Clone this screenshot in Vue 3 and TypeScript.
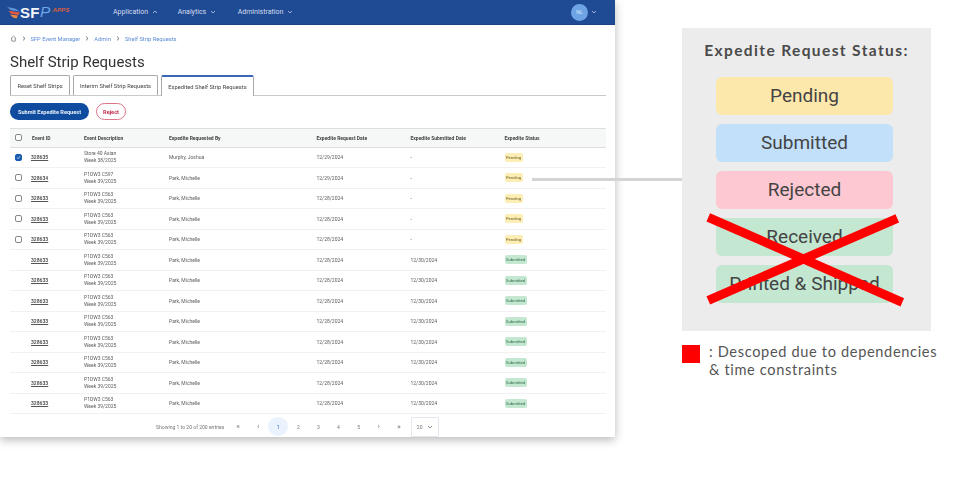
<script setup lang="ts">
interface Row {
  id: string
  line1: string
  line2: string
  by: string
  reqDate: string
  subDate: string
  status: 'Pending' | 'Submitted'
  check: 'on' | 'off' | 'none'
}
const pending = (id: string, line1: string, line2: string, by: string, reqDate: string, check: 'on' | 'off'): Row => ({
  id, line1, line2, by, reqDate, subDate: '-', status: 'Pending', check,
})
const submitted = (): Row => ({
  id: '328633', line1: 'P1DW3 C563', line2: 'Week 39/2025', by: 'Park, Michelle',
  reqDate: '12/28/2024', subDate: '12/30/2024', status: 'Submitted', check: 'none',
})
const rows: Row[] = [
  pending('328635', 'Store 40 Asian', 'Week 38/2025', 'Murphy, Joshua', '12/29/2024', 'on'),
  pending('328634', 'P1DW3 C597', 'Week 39/2025', 'Park, Michelle', '12/29/2024', 'off'),
  pending('328633', 'P1DW3 C563', 'Week 39/2025', 'Park, Michelle', '12/28/2024', 'off'),
  pending('328633', 'P1DW3 C563', 'Week 39/2025', 'Park, Michelle', '12/28/2024', 'off'),
  pending('328633', 'P1DW3 C563', 'Week 39/2025', 'Park, Michelle', '12/28/2024', 'off'),
  ...Array.from({ length: 8 }, submitted),
]
const pages = ['«', '‹', '1', '2', '3', '4', '5', '›', '»']
const pills = [
  { label: 'Pending', cls: 'p-yellow' },
  { label: 'Submitted', cls: 'p-blue' },
  { label: 'Rejected', cls: 'p-red' },
  { label: 'Received', cls: 'p-green' },
  { label: 'Printed & Shipped', cls: 'p-green' },
]
</script>

<template>
  <div class="stage">
    <section class="window">
      <header class="nav">
        <div class="logo">
          <svg class="swoosh" width="14" height="12" viewBox="0 0 14 12">
            <path d="M0 0 L8 1.5 L13 4.6 L4 3.2 Z" fill="#5f95d8" />
            <path d="M1.5 3.8 L13 5.4 L11.5 8 L4 6.8 Z" fill="#e2573f" />
            <path d="M3 7.4 L11 8.6 L9.5 11.4 L6 10.6 Z" fill="#ef8a3c" />
          </svg>
          <span class="sf">SF</span><span class="pp">P</span><span class="apps">APPS</span>
        </div>
        <nav class="menu">
          <span class="mi m1">Application
            <svg width="6" height="4" viewBox="0 0 6 4"><path d="M1 3 L3 1 L5 3" class="chev" /></svg>
          </span>
          <span class="mi m2">Analytics
            <svg width="6" height="4" viewBox="0 0 6 4"><path d="M1 1 L3 3 L5 1" class="chev" /></svg>
          </span>
          <span class="mi">Administration
            <svg width="6" height="4" viewBox="0 0 6 4"><path d="M1 1 L3 3 L5 1" class="chev" /></svg>
          </span>
        </nav>
        <div class="user">
          <span class="avatar">NL</span>
          <svg width="6" height="4" viewBox="0 0 6 4"><path d="M1 1 L3 3 L5 1" class="chev" /></svg>
        </div>
      </header>

      <div class="content">
        <div class="crumbs">
          <svg width="7" height="7" viewBox="0 0 8 8">
            <path d="M1 4 L4 1.2 L7 4 M2 3.4 V7 H6 V3.4" fill="none" stroke="#555" stroke-width="0.7" />
          </svg>
          <svg class="sep" width="4" height="5" viewBox="0 0 4 5"><path d="M1 0.6 L3 2.5 L1 4.4" /></svg>
          <span>SFP Event Manager</span>
          <svg class="sep" width="4" height="5" viewBox="0 0 4 5"><path d="M1 0.6 L3 2.5 L1 4.4" /></svg>
          <span>Admin</span>
          <svg class="sep" width="4" height="5" viewBox="0 0 4 5"><path d="M1 0.6 L3 2.5 L1 4.4" /></svg>
          <span>Shelf Strip Requests</span>
        </div>

        <h1 class="title">Shelf Strip Requests</h1>

        <div class="tabs">
          <span class="tab t1">Reset Shelf Strips</span>
          <span class="tab t2">Interim Shelf Strip Requests</span>
          <span class="tab t3">Expedited Shelf Strip Requests</span>
        </div>

        <div class="actions">
          <button class="btn primary">Submit Expedite Request</button>
          <button class="btn danger">Reject</button>
        </div>

        <div class="table">
          <div class="row head">
            <span class="box"></span>
            <span>Event ID</span>
            <span>Event Description</span>
            <span>Expedite Requested By</span>
            <span>Expedite Request Date</span>
            <span>Expedite Submitted Date</span>
            <span>Expedite Status</span>
          </div>
          <div v-for="(r, i) in rows" :key="i" class="row body">
            <span v-if="r.check === 'off'" class="box"></span>
            <span v-else-if="r.check === 'on'" class="box on">
              <svg width="5" height="5" viewBox="0 0 5 5"><path d="M1 2.6 L2.1 3.7 L4 1.2" fill="none" stroke="#fff" stroke-width="0.7" /></svg>
            </span>
            <span v-else></span>
            <span class="id">{{ r.id }}</span>
            <span class="desc">{{ r.line1 }}<br />{{ r.line2 }}</span>
            <span>{{ r.by }}</span>
            <span>{{ r.reqDate }}</span>
            <span>{{ r.subDate }}</span>
            <span><em class="badge" :class="r.status === 'Pending' ? 'b-pending' : 'b-submitted'">{{ r.status }}</em></span>
          </div>
        </div>

        <footer class="pager">
          <span class="info">Showing 1 to 20 of 200 entries</span>
          <div class="pages">
            <span v-for="p in pages" :key="p" class="page" :class="{ active: p === '1', arrow: isNaN(Number(p)) }">{{ p }}</span>
          </div>
          <span class="size">20
            <svg width="6" height="4" viewBox="0 0 6 4"><path d="M1 1 L3 3 L5 1" fill="none" stroke="#666" stroke-width="0.7" /></svg>
          </span>
        </footer>
      </div>
    </section>

    <aside class="side">
      <div class="panel">
        <h2 class="ptitle">Expedite Request Status:</h2>
        <div v-for="p in pills" :key="p.label" class="pill" :class="p.cls">{{ p.label }}</div>
      </div>
      <div class="legend">
        <span class="swatch"></span>
        <p class="ltext">: Descoped due to dependencies<br />&amp; time constraints</p>
      </div>
    </aside>

    <div class="connector"></div>
    <svg class="cross" width="210" height="100" viewBox="0 0 210 100">
      <path d="M8.3 8.3 L202.3 93.3" stroke="#ff0000" stroke-width="9" />
      <path d="M8.3 91.3 L197.3 9.3" stroke="#ff0000" stroke-width="9" />
    </svg>
  </div>
</template>

<style>
body { margin: 0; background: #fff; }
</style>

<style scoped>
.stage {
  position: relative;
  width: 960px;
  height: 500px;
  overflow: hidden;
  display: flex;
  align-items: flex-start;
  background: #fff;
  font-family: Roboto, "Liberation Sans", sans-serif;
}
.window {
  width: 615px;
  height: 437px;
  flex: none;
  background: #fff;
  box-shadow: 0 3px 9px rgba(0, 0, 0, 0.28);
  filter: blur(0.3px);
}
.nav {
  height: 24px;
  border-bottom: 1px solid #1a4285;
  background: #1f4a94;
  display: flex;
  align-items: center;
  color: #d3ddef;
}
.logo {
  width: 113px;
  padding-left: 7px;
  box-sizing: border-box;
  display: flex;
  align-items: center;
  flex: none;
  height: 24px;
}
.swoosh { margin-top: 1px; margin-right: -1px; }
.sf { font: 700 15px/1 "Liberation Sans", sans-serif; color: #f3f6fb; letter-spacing: 0.2px; }
.pp { font: italic 400 15.5px/1 "Liberation Sans", sans-serif; color: #6ea4e8; margin-left: 0.5px; }
.apps { font: italic 700 6.2px/1 "Liberation Sans", sans-serif; color: #d9603f; margin: -4px 0 0 2px; }
.menu { display: flex; font-size: 7px; flex: 1; }
.mi { display: inline-flex; align-items: center; gap: 3.5px; }
.m1 { margin-right: 20px; }
.m2 { margin-right: 22px; }
.chev { fill: none; stroke: #d3ddef; stroke-width: 0.7; }
.user { display: flex; align-items: center; gap: 3px; margin-right: 18px; }
.avatar {
  width: 17px;
  height: 17px;
  border-radius: 50%;
  background: #6ea3e6;
  color: #dbe8fa;
  font-size: 5px;
  display: flex;
  align-items: center;
  justify-content: center;
}
.content { padding: 0 9px 0 10px; }
.crumbs {
  height: 7px;
  margin-top: 10px;
  display: flex;
  align-items: center;
  font-size: 5.75px;
  color: #5b8bd6;
}
.crumbs svg:first-child { margin-left: -0.5px; }
.sep { margin: 0 5px; fill: none; stroke: #444; stroke-width: 0.7; }
.title {
  margin: 11px 0 0;
  height: 18px;
  font-size: 15px;
  line-height: 18px;
  font-weight: 400;
  color: #333;
}
.tabs {
  margin-top: 4px;
  height: 21px;
  border-bottom: 1px solid #c9c9c9;
  display: flex;
  align-items: flex-start;
  font-size: 5.75px;
  color: #444;
  box-sizing: border-box;
}
.tab {
  box-sizing: border-box;
  height: 20px;
  border: 1px solid #aaa;
  border-bottom: none;
  border-radius: 2px 2px 0 0;
  display: flex;
  align-items: center;
  justify-content: center;
  background: #fff;
}
.t1 { width: 60px; margin-right: 3px; }
.t2 { width: 85px; margin-right: 3px; }
.t3 { width: 93px; height: 21px; border-top: 2.5px solid #3a67b6; }
.actions { margin-top: 7px; display: flex; gap: 7px; height: 17px; }
.btn {
  height: 17px;
  padding: 0;
  border-radius: 9px;
  font: 700 5.6px Roboto, sans-serif;
}
.primary { width: 79px; background: #0f4c9f; border: none; color: #e8eff9; }
.danger { width: 30px; background: #fff; border: 1px solid #dd7488; color: #c0304f; }
.table { margin-top: 8px; }
.row {
  display: grid;
  grid-template-columns: 22px 52px 85px 147.5px 94px 94px 1fr;
  align-items: center;
  font-size: 5px;
  color: #5c5c5c;
  box-sizing: border-box;
}
.row > .box { margin-left: 5px; }
.head {
  height: 19.5px;
  background: #f6f8f8;
  border-top: 1px solid #dedede;
  border-bottom: 1px solid #dedede;
  font-weight: 700;
  color: #444;
}
.body { height: 20.5px; border-bottom: 1px solid #f1f1f1; }
.box {
  width: 7px;
  height: 7px;
  box-sizing: border-box;
  border: 0.8px solid #888;
  border-radius: 2px;
  background: #fff;
  display: flex;
  align-items: center;
  justify-content: center;
}
.on { background: #1a5bb0; border-color: #1a5bb0; }
.id { font-weight: 700; color: #555; text-decoration: underline; margin-left: -1px; }
.desc { line-height: 7px; }
.badge {
  display: inline-block;
  font-style: normal;
  font-size: 4.2px;
  line-height: 9px;
  padding: 0 1.5px;
  border-radius: 2px;
}
.b-pending { background: #fdeeb5; color: #6b5a20; }
.b-submitted { background: #c3e7d1; color: #2d6a45; }
.pager {
  height: 24px;
  padding-top: 1px;
  box-sizing: border-box;
  display: flex;
  align-items: center;
  font-size: 5.05px;
  color: #777;
}
.info { margin-left: 146px; width: 72px; flex: none; white-space: nowrap; }
.pages { display: flex; }
.page {
  width: 20.1px;
  height: 19px;
  display: flex;
  align-items: center;
  justify-content: center;
  font-size: 5px;
  border-radius: 50%;
}
.arrow { font-size: 8px; line-height: 1; }
.active { background: #eaf2fd; color: #2b6cc4; }
.size {
  margin-left: 2px;
  box-sizing: border-box;
  width: 28px;
  height: 20px;
  border: 1px solid #e4e8ee;
  border-radius: 1px;
  display: flex;
  align-items: center;
  gap: 4px;
  padding-left: 5px;
}
.side { margin: 28px 0 0 67px; width: 260px; flex: none; }
.panel {
  box-sizing: border-box;
  width: 249px;
  height: 303px;
  background: #ececec;
  padding-top: 13px;
  display: flex;
  flex-direction: column;
  align-items: center;
  gap: 9px;
}
.ptitle {
  margin: 0 0 8px;
  height: 19px;
  font: 700 15.5px/19px Lato, sans-serif;
  letter-spacing: 1.38px;
  color: #4a4a4a;
  white-space: nowrap;
}
.pill {
  width: 177px;
  height: 38px;
  margin-right: 4px;
  border-radius: 6px;
  font-size: 19px;
  line-height: 37px;
  text-align: center;
  color: #444;
}
.p-yellow { background: #fde8ac; }
.p-blue { background: #c2e0f9; }
.p-red { background: #fec8d2; }
.p-green { background: #c3e7d1; }
.legend { display: flex; margin-top: 14px; }
.swatch { width: 18px; height: 18px; background: #ff0000; flex: none; }
.ltext {
  margin: -2px 0 0 9px;
  font: 400 14.6px/18px Lato, sans-serif;
  letter-spacing: 0.65px;
  color: #555;
  white-space: nowrap;
}
.connector {
  position: absolute;
  left: 532px;
  top: 178px;
  width: 150px;
  height: 3px;
  background: #d4d4d4;
}
.cross { position: absolute; left: 700px; top: 209px; }
</style>
